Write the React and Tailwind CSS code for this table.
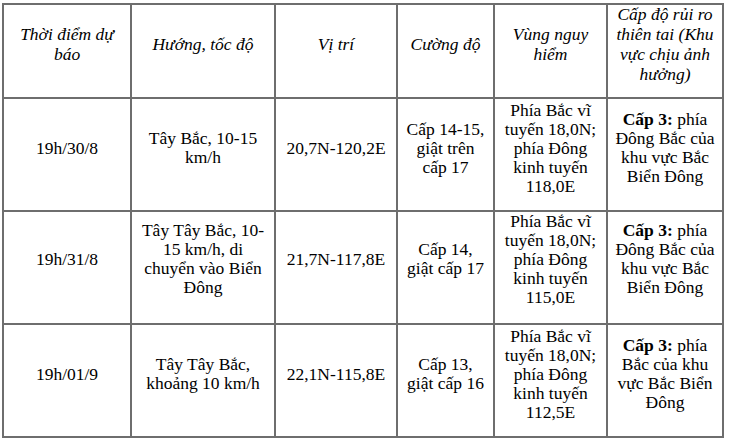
const headers = [
  ["Thời điểm dự", "báo"],
  ["Hướng, tốc độ"],
  ["Vị trí"],
  ["Cường độ"],
  ["Vùng nguy", "hiểm"],
  ["Cấp độ rủi ro", "thiên tai (Khu", "vực chịu ảnh", "hưởng)"],
];

const rows = [
  {
    time: "19h/30/8",
    dir: ["Tây Bắc, 10-15", "km/h"],
    pos: "20,7N-120,2E",
    force: ["Cấp 14-15,", "giật trên", "cấp 17"],
    zone: ["Phía Bắc vĩ", "tuyến 18,0N;", "phía Đông", "kinh tuyến", "118,0E"],
    risk: ["Đông Bắc của", "khu vực Bắc", "Biển Đông"],
    pb: "pb-[13px]",
  },
  {
    time: "19h/31/8",
    dir: ["Tây Tây Bắc, 10-", "15 km/h, di", "chuyển vào Biển", "Đông"],
    pos: "21,7N-117,8E",
    force: ["Cấp 14,", "giật cấp 17"],
    zone: ["Phía Bắc vĩ", "tuyến 18,0N;", "phía Đông", "kinh tuyến", "115,0E"],
    risk: ["Đông Bắc của", "khu vực Bắc", "Biển Đông"],
    pb: "pb-[17px]",
  },
  {
    time: "19h/01/9",
    dir: ["Tây Tây Bắc,", "khoảng 10 km/h"],
    pos: "22,1N-115,8E",
    force: ["Cấp 13,", "giật cấp 16"],
    zone: ["Phía Bắc vĩ", "tuyến 18,0N;", "phía Đông", "kinh tuyến", "112,5E"],
    risk: ["Bắc của khu", "vực Bắc Biển", "Đông"],
    pb: "pb-[13px]",
  },
];

function Lines({ lines }) {
  return lines.map((line, i) => (
    <span key={i} className="block whitespace-nowrap">
      {line}
    </span>
  ));
}

function Cell({ children, className = "" }) {
  return (
    <div
      className={
        "bg-white flex flex-col items-center justify-center text-center overflow-visible " +
        className
      }
    >
      {children}
    </div>
  );
}

function App() {
  return (
    <div className="w-[730px] h-[442px] bg-white pl-[2px] pt-[3px] font-['Liberation_Serif'] text-[17.5px] text-black">
      <div className="inline-grid grid-cols-[126px_142px_120px_95px_111px_114px] grid-rows-[92px_111px_111px_111px] gap-[2px] p-[2px] bg-[#6e6e6e]">
        {headers.map((h, i) => (
          <Cell key={i} className="italic leading-[20px] pb-[14px]">
            <Lines lines={h} />
          </Cell>
        ))}
        {rows.map((r, i) => (
          <div key={i} className="contents">
            <Cell className={"leading-[19px] " + r.pb}>
              <span>{r.time}</span>
            </Cell>
            <Cell className={"leading-[19px] " + r.pb}>
              <Lines lines={r.dir} />
            </Cell>
            <Cell className={"leading-[19px] " + r.pb}>
              <span>{r.pos}</span>
            </Cell>
            <Cell className={"leading-[19px] " + r.pb}>
              <Lines lines={r.force} />
            </Cell>
            <Cell className={"leading-[19px] " + r.pb}>
              <Lines lines={r.zone} />
            </Cell>
            <Cell className={"leading-[19px] " + r.pb}>
              <span className="block whitespace-nowrap">
                <b>Cấp 3:</b> phía
              </span>
              <Lines lines={r.risk} />
            </Cell>
          </div>
        ))}
      </div>
    </div>
  );
}

export default App;
